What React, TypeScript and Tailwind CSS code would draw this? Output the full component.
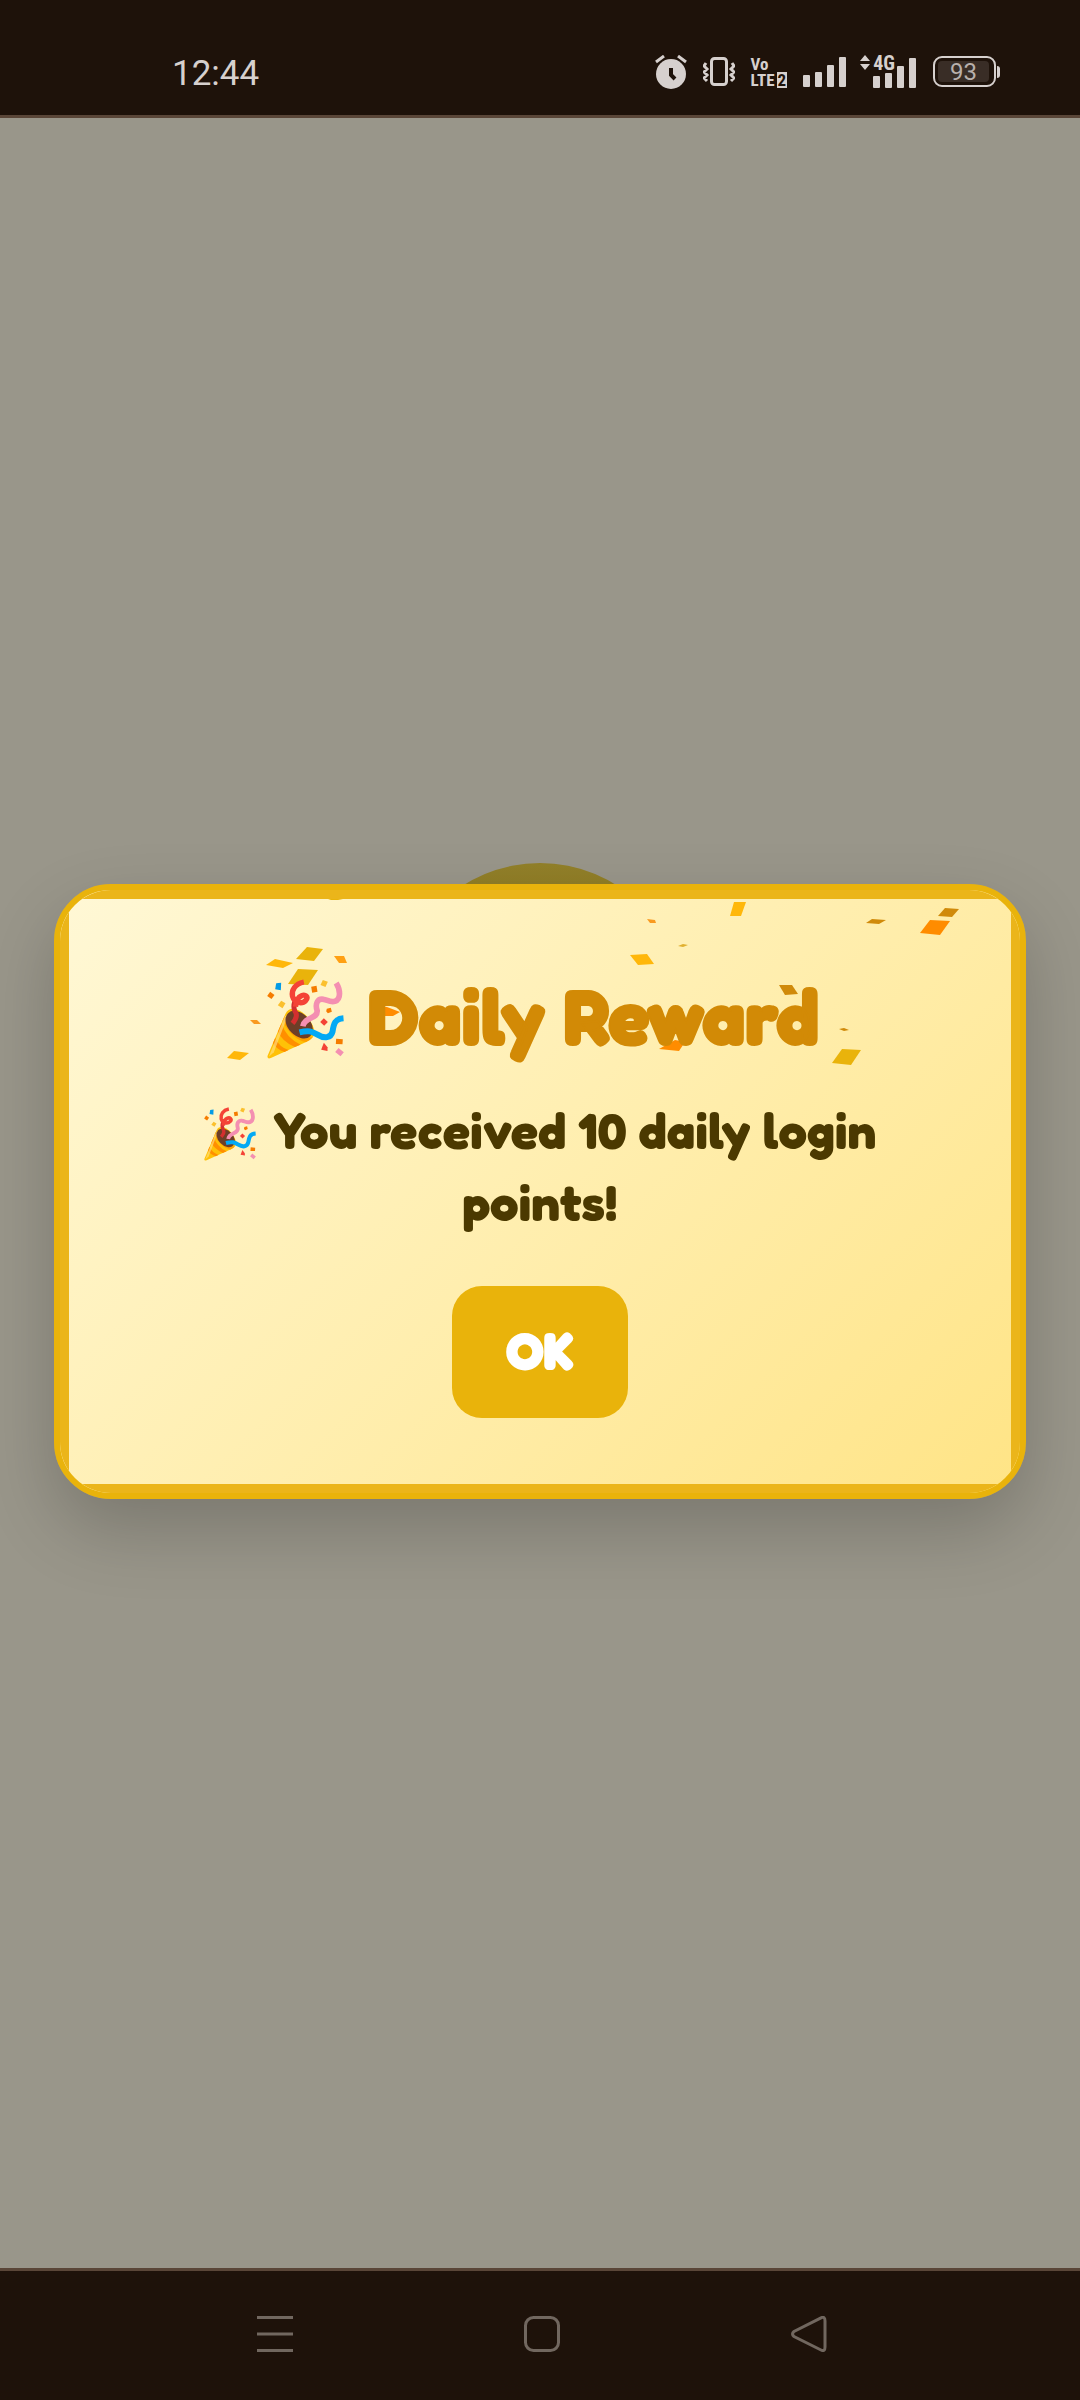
type Piece = { points: string; color: string };

const GOLD = '#e9b30b';
const AMBER = '#ffb70a';
const ORANGE = '#ff8c00';
const BRONZE = '#d08a0a';

const confetti: Piece[] = [
	{ points: '259,0 274,0 269,1 262,1', color: GOLD },
	{ points: '238,48 254,50 245,62 227,60', color: GOLD },
	{ points: '206,60 224,64 214,69 197,66', color: AMBER },
	{ points: '265,57 275,57 278,64 270,64', color: '#ffa013' },
	{ points: '229,70 249,71 239,86 219,85', color: GOLD },
	{ points: '181,121 188,121 192,125 185,125', color: '#f99a20' },
	{ points: '165,152 180,154 171,161 158,159', color: AMBER },
	{ points: '311,107 318,108 331,113 324,117 311,117', color: ORANGE },
	{ points: '578,20 586,21 587,24 581,24', color: '#f99a20' },
	{ points: '609,47 614,45 619,46 614,48', color: '#e0b030' },
	{ points: '561,56 578,55 585,65 569,66', color: AMBER },
	{ points: '606,141 616,143 610,152 590,150', color: ORANGE },
	{ points: '665,3 677,3 672,17 661,17', color: AMBER },
	{ points: '803,20 817,21 810,25 797,24', color: BRONZE },
	{ points: '876,9 890,10 883,18 869,17', color: BRONZE },
	{ points: '861,21 881,22 871,36 851,34', color: ORANGE },
	{ points: '710,86 723,86 729,95 716,96', color: BRONZE },
	{ points: '770,130 775,129 780,131 775,132', color: BRONZE },
	{ points: '773,150 792,151 782,166 763,164', color: GOLD },
];

const App = () => {
	return (
		<div className="flex min-h-screen flex-col bg-[#99968a] font-['Roboto',sans-serif]">
			<StatusBar />
			<main className="relative flex flex-1 flex-col items-center justify-center px-[54px] pb-1">
				<div className="relative w-full">
					{/* badge that peeks out behind the dialog */}
					<div className="absolute -top-[21px] left-1/2 size-72 -translate-x-1/2 rounded-full bg-linear-to-b from-[#928029] to-[#806400]" />
					<RewardDialog />
				</div>
			</main>
			<NavigationBar />
		</div>
	);
};

export default App;

const RewardDialog = () => {
	return (
		<section
			role="dialog"
			aria-labelledby="reward-title"
			className="relative w-full overflow-hidden rounded-[57px] border-6 border-[#e9b30b] bg-linear-135 from-[#fff8d6] to-[#ffe485] shadow-[0_30px_72px_rgba(0,0,0,0.2)]"
		>
			<div className="relative flex flex-col items-center border-9 border-[#ebb51a] px-24 pt-[66px] pb-[66px] text-center font-['Fredoka_One','Fredoka','Lato',sans-serif]">
				<Confetti />
				<h1
					id="reward-title"
					className="relative flex items-center gap-6 pl-1.5 text-[77px] leading-[101px] font-bold whitespace-nowrap text-[#d28a06] [-webkit-text-stroke:2px_#d28a06] [stroke-linejoin:round]"
				>
					<PartyPopper className="mt-2 h-20 w-[77px]" />
					Daily Reward
				</h1>
				<p className="relative mt-7 text-[51px] leading-[72px] font-bold text-[#4b3900] [font-synthesis:none]">
					<PartyPopper className="mr-[18px] inline-block h-[54px] w-[52px] align-[-12px]" />
					You received 10 daily login points!
				</p>
				<button
					type="button"
					className="relative mt-12 h-[132px] rounded-[30px] bg-[#e9b30b] px-[54px] pb-0.5 text-[51px] font-bold text-white [-webkit-text-stroke:2px_white] [stroke-linejoin:round]"
				>
					OK
				</button>
			</div>
		</section>
	);
};

const Confetti = () => {
	return (
		<svg className="absolute inset-x-0 top-0 w-full" viewBox="0 0 942 200" aria-hidden="true">
			{confetti.map((piece) => (
				<polygon key={piece.points} points={piece.points} fill={piece.color} />
			))}
		</svg>
	);
};

const PartyPopper = ({ className }: { className: string }) => {
	return (
		<svg className={className} viewBox="0 0 230 240" fill="none" role="img" aria-label="🎉">
			<path d="M1 231L55 104Q64 86 84 90Q116 98 136 138Q148 164 134 178Q126 185 112 191L11 237Q0 241 1 231Z" fill="#ffc107" />
			<path d="M43 133Q56 176 100 197L83 204Q45 187 32 158Z" fill="#ff8f00" />
			<path d="M24 177Q36 204 64 213L52 219Q28 211 17 193Z" fill="#ff8f00" />
			<path d="M52 111Q62 152 108 171Q122 176 137 174Q130 184 116 190Q74 180 46 126Z" fill="#ffa000" />
			<path d="M53 112L63 107L20 220L5 233Z" fill="#ffe082" opacity=".65" />
			<ellipse cx="96" cy="137" rx="48" ry="33" transform="rotate(46 96 137)" fill="#6d3e27" />
			<path d="M76 133Q94 112 84 98Q77 84 83 68" stroke="#d32f2f" strokeWidth="15" />
			<path d="M110 9C84 14 72 34 76 52C82 73 105 76 116 64C125 53 114 45 103 50C91 55 86 73 85 83" stroke="#f44336" strokeWidth="16" />
			<path d="M107 142C112 112 152 121 150 95C143 74 151 58 169 61C180 62 188 71 203 67C223 60 219 31 207 12" stroke="#f48fb1" strokeWidth="17" />
			<path d="M97 160C125 153 134 157 151 167C172 180 191 177 196 158C200 133 203 120 229 118" stroke="#03a9f4" strokeWidth="18" />
			<path d="M27 13L42 11L41 34L24 31Z" fill="#039be5" />
			<path d="M9 38L22 48L13 60L0 51Z" fill="#f57c00" />
			<path d="M42 65L55 73L46 88L32 79Z" fill="#fbc02d" />
			<path d="M132 23L148 20L151 38L135 41Z" fill="#f57c00" />
			<path d="M167 3L182 8L175 24L160 18Z" fill="#fbc02d" />
			<path d="M179 89L191 86L194 98L182 103L177 97Z" fill="#f57c00" />
			<path d="M170 118L182 129L171 140L159 129Z" fill="#f44336" />
			<path d="M207 179L227 181L226 196L206 195Z" fill="#f57c00" />
			<path d="M170 191L181 205L181 216L162 212Z" fill="#f44336" />
			<path d="M214 207L230 220L220 232L204 219Z" fill="#f48fb1" />
		</svg>
	);
};

const StatusBar = () => {
	return (
		<header className="flex h-[118px] items-center justify-between border-b-3 border-[#5a4638] bg-[#1e120a] pt-7 pr-20 pl-[172px] text-[#d6d0ce]">
			<time className="pt-1 text-[35px] leading-9">12:44</time>
			<div className="flex items-center gap-4">
				<svg className="h-[34px] w-8" viewBox="0 0 32 34" fill="none" aria-label="Alarm">
					<circle cx="16" cy="19" r="15" fill="currentColor" />
					<path d="M1 7L9 1M31 7L23 1" stroke="currentColor" strokeWidth="3" />
					<path d="M16 13V20L20 24" stroke="#1e120a" strokeWidth="4" />
				</svg>
				<svg className="h-[30px] w-8" viewBox="0 0 32 30" fill="none" stroke="currentColor" aria-label="Vibrate">
					<rect x="8.5" y="1.5" width="15" height="26" rx="3" strokeWidth="3" />
					<path d="M3 6L1 9L4 12L1 15L4 18L1 21L4 24M29 6L31 9L28 12L31 15L28 18L31 21L28 24" strokeWidth="3" />
				</svg>
				<div className="flex flex-col font-['Roboto_Condensed','Liberation_Sans_Narrow','Roboto',sans-serif] text-[17px] leading-4 font-bold">
					<span>Vo</span>
					<span className="flex items-center gap-0.5">
						LTE
						<span className="bg-[#d6d0ce] px-px text-[#1e120a]">2</span>
					</span>
				</div>
				<SignalBars />
				<div className="-ml-1 flex items-end">
					<div className="-mr-[22px] flex h-[33px] items-start gap-0.5">
						<svg className="h-4 w-3" viewBox="0 0 12 16" fill="currentColor" aria-hidden="true">
							<path d="M6 0L11 6H1ZM6 15L11 9H1Z" />
						</svg>
						<span className="font-['Roboto_Condensed','Liberation_Sans_Narrow','Roboto',sans-serif] text-[20px] leading-4 font-bold">
							4G
						</span>
					</div>
					<SignalBars />
				</div>
				<div className="flex items-center gap-px">
					<div className="h-[31px] w-[63px] rounded-[9px] border-2 border-current p-[3px]">
						<div className="flex h-full w-[51px] items-center justify-center rounded-sm bg-[#392d26] text-[24px] text-[#b8b0ac]">
							93
						</div>
					</div>
					<div className="h-3 w-[3px] rounded-r-sm bg-current" />
				</div>
			</div>
		</header>
	);
};

const SignalBars = () => {
	return (
		<svg className="h-[30px] w-11" viewBox="0 0 44 30" fill="currentColor" aria-label="Signal">
			<rect x="0" y="18" width="7" height="12" rx="1" />
			<rect x="12" y="15" width="7" height="15" rx="1" />
			<rect x="24" y="8" width="7" height="22" rx="1" />
			<rect x="36" y="0" width="7" height="30" rx="1" />
		</svg>
	);
};

const NavigationBar = () => {
	return (
		<nav className="flex h-[132px] items-center justify-between border-t-3 border-[#5a4638] bg-[#1e120a] pr-[253px] pb-1 pl-[257px] text-[#71675f]">
			<button type="button" aria-label="Recent apps">
				<svg className="size-9" viewBox="0 0 36 36" stroke="currentColor" strokeWidth="3">
					<path d="M0 1.5H36M0 18H36M0 34.5H36" />
				</svg>
			</button>
			<button type="button" aria-label="Home">
				<svg className="size-9" viewBox="0 0 36 36" fill="none" stroke="currentColor" strokeWidth="3">
					<rect x="1.5" y="1.5" width="33" height="33" rx="8" />
				</svg>
			</button>
			<button type="button" aria-label="Back">
				<svg className="size-9" viewBox="0 0 36 36" fill="none" stroke="currentColor" strokeWidth="3">
					<path d="M30 1.8Q34 0 34 5V31Q34 36 30 34L3 20.5Q0 18 3 15.5Z" />
				</svg>
			</button>
		</nav>
	);
};
